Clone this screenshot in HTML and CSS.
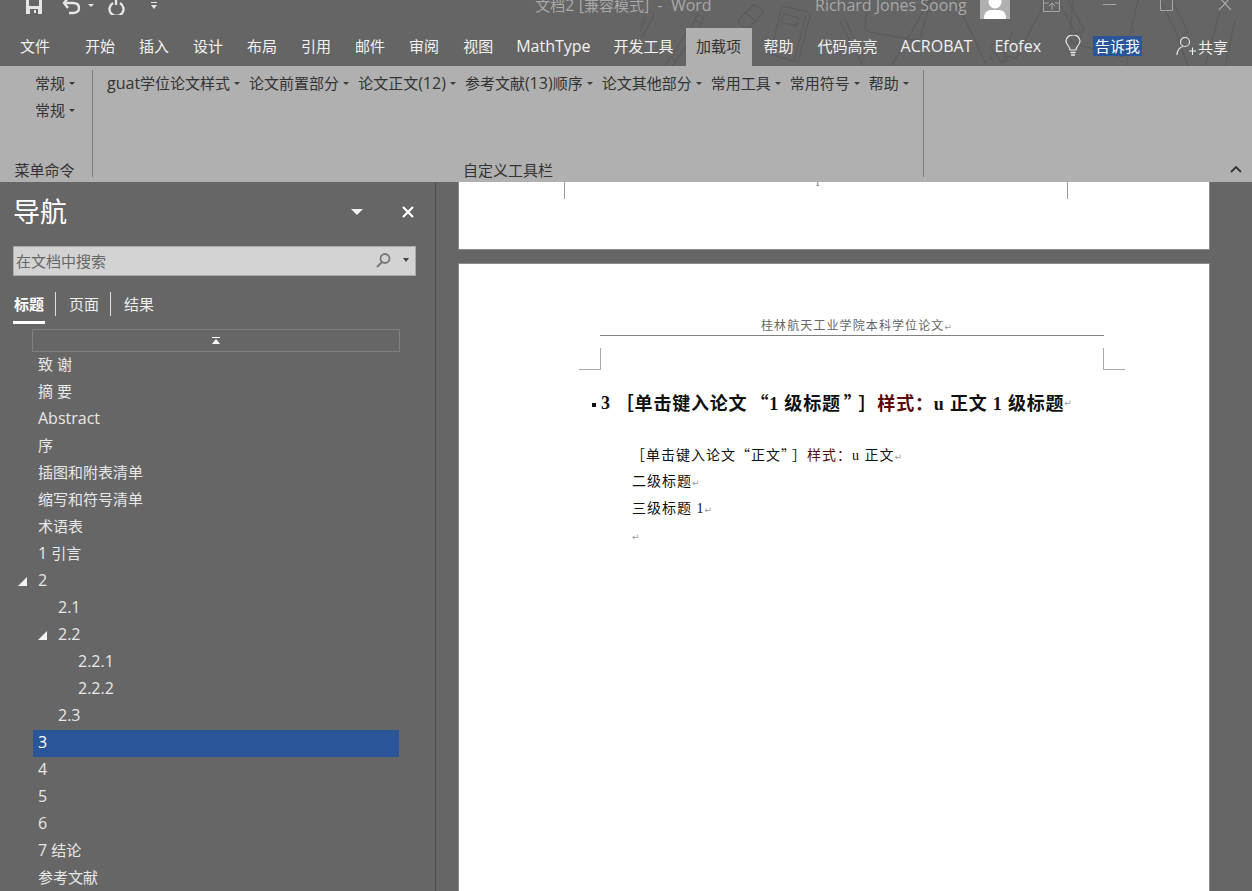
FILE: index.html
```html
<!DOCTYPE html>
<html lang="zh-CN">
<head>
<meta charset="utf-8">
<title>文档2 [兼容模式] - Word</title>
<link rel="stylesheet" href="styles.css">
</head>
<body>
<header class="chrome">
  <svg class="doodles" width="612" height="66" viewBox="640 0 612 66" fill="none" stroke="#5b5b5b" stroke-width="1.1">
    <path d="M636 34l10-20c3-5 9-2 7 3l-9 17c-2 4-6 2-5-1l7-14"/>
    <path d="M665 66l30-46 7 4-30 42M671 58l7 5M695 20l3-6 5 3-1 7"/>
    <path d="M740 18l14-14 10 8-14 15c-3 2-5 2-7 0l-4-4c-1-2-1-3 1-5zM746 13l11 9"/>
    <path d="M782 6l26 6c2 0 3 2 2 4l-12 46-28-8zM784 14l15 4-3 8-15-4zM806 16l-12 45"/>
    <path d="M840 22l19 36 4 7M845 20l19 37M860 65l5-6"/>
    <path d="M868 0l-3 26c0 3 1 5 4 6l46 8c3 0 5-1 6-4l10-36M930 0l-28 48-10 17"/>
    <path d="M992 60c-4-5 0-9 3-6l6 7c4 4 8-1 5-5l-10-11c-3-3-7 0-5 3l9 11"/>
    <path d="M1012 32l-10 31 6-7 8 2 30-58M955 0l20 40 10 23"/>
    <path d="M1058 0l18 34 8-4-16-30M1074 34l4 12 4-14"/>
    <path d="M1073 0l-3 36c0 4 2 7 6 8l42 12c4 1 7 0 8-4l12-52M1134 30l-8 36"/>
    <path d="M1160 0l16 32 12 34M1172 0l16 32-6 3"/>
    <path d="M1205 66l18-66M1235 20l-10 46"/>
  </svg>
  <div class="titlebar">
    <div class="qat">
      <svg class="qat-save" width="16" height="14" viewBox="0 0 16 14"><path d="M0-4h16v18H0z" fill="#e6e6e6"/><path d="M3-4h10v10H3z" fill="#666"/><path d="M4 9h8v5H4z" fill="#666"/><path d="M8 10h2v3H8z" fill="#e6e6e6"/></svg>
      <svg class="qat-undo" width="19" height="15" viewBox="0 0 19 15" fill="none" stroke="#e6e6e6" stroke-width="2.4"><path d="M2 3h9c4 0 6 2 6 5s-2 5-6 5H7"/><path d="M6-2L2 3l4 5"/></svg>
      <span class="caret caret-light qat-caret"></span>
      <svg class="qat-redo" width="17" height="15" viewBox="0 0 17 15" fill="none" stroke="#e6e6e6" stroke-width="2.4"><path d="M5 3a7 7 0 1 0 7 0"/><path d="M8-2v7"/></svg>
      <svg class="qat-more" width="6" height="8" viewBox="0 0 6 8" fill="#e6e6e6"><path d="M0 0h6v1H0zM0 3h6L3 7z"/></svg>
    </div>
    <div class="doc-title">文档<span class="lat">2 [</span>兼容模式<span class="lat">]&nbsp; -&nbsp; Word</span></div>
    <div class="account">
      <span class="user lat">Richard Jones Soong</span>
      <span class="avatar"><svg width="30" height="19" viewBox="0 0 30 19" fill="#fff"><circle cx="15" cy="2" r="6.5"/><path d="M4 19c0-7 3-9 8-9h6c5 0 8 2 8 9z"/></svg></span>
      <svg class="win win-restore" width="18" height="12" viewBox="0 0 18 12" fill="none" stroke="#a6a6a6"><path d="M.5 0v11.5h16V0M9 10V3M6 6l3-3 3 3M.5 3h5M12 3h4.500"/></svg>
      <svg class="win win-min" width="14" height="12" viewBox="0 0 14 12" stroke="#a6a6a6"><path d="M0 4.500h13"/></svg>
      <svg class="win win-max" width="14" height="12" viewBox="0 0 14 12" fill="none" stroke="#a6a6a6"><path d="M.5-2v12.500h12V-2"/></svg>
      <svg class="win win-close" width="14" height="12" viewBox="0 0 14 12" stroke="#a6a6a6" stroke-width="1.200"><path d="M1-3l12 13M13-3L1 10"/></svg>
    </div>
  </div>
  <nav class="tabs">
    <span class="tab tab-file">文件</span>
    <span class="tab">开始</span>
    <span class="tab">插入</span>
    <span class="tab">设计</span>
    <span class="tab">布局</span>
    <span class="tab">引用</span>
    <span class="tab">邮件</span>
    <span class="tab">审阅</span>
    <span class="tab">视图</span>
    <span class="tab tab-lat">MathType</span>
    <span class="tab">开发工具</span>
    <span class="tab tab-active">加载项</span>
    <span class="tab">帮助</span>
    <span class="tab">代码高亮</span>
    <span class="tab tab-lat">ACROBAT</span>
    <span class="tab tab-lat">Efofex</span>
    <svg class="bulb" width="16" height="21" viewBox="0 0 16 21" fill="none" stroke="#ececec" stroke-width="1.200"><path d="M5 15c0-4-4-5-4-9a7 6 0 0 1 14 0c0 4-4 5-4 9z"/><path d="M5.500 17.500h5M6 20h4" stroke-width="1.600"/></svg>
    <span class="tell">告诉我</span>
    <span class="share"><svg width="20" height="20" viewBox="0 0 20 20" fill="none" stroke="#ececec" stroke-width="1.100"><circle cx="9" cy="6" r="4.500"/><path d="M1 19c0-5 3-8 6-8.500M13 15h7M16.500 11.500v7.500"/></svg>共享</span>
  </nav>
</header>

<section class="ribbon">
  <div class="group group-menu">
    <div class="group-stack">
      <span class="cmd">常规<i class="caret"></i></span>
      <span class="cmd">常规<i class="caret"></i></span>
    </div>
    <div class="group-label">菜单命令</div>
  </div>
  <div class="group group-tools">
    <div class="group-row">
      <span class="cmd"><span><span class="lat">guat</span>学位论文样式</span><i class="caret"></i></span>
      <span class="cmd">论文前置部分<i class="caret"></i></span>
      <span class="cmd"><span>论文正文<span class="lat">(12)</span></span><i class="caret"></i></span>
      <span class="cmd"><span>参考文献<span class="lat">(13)</span>顺序</span><i class="caret"></i></span>
      <span class="cmd">论文其他部分<i class="caret"></i></span>
      <span class="cmd">常用工具<i class="caret"></i></span>
      <span class="cmd">常用符号<i class="caret"></i></span>
      <span class="cmd">帮助<i class="caret"></i></span>
    </div>
    <div class="group-label">自定义工具栏</div>
  </div>
  <div class="ribbon-end">
    <svg width="12" height="8" viewBox="0 0 12 8" fill="none" stroke="#333" stroke-width="1.800"><path d="M1 7l5-5 5 5"/></svg>
  </div>
</section>

<main class="workspace">
  <aside class="navpane">
    <div class="nav-head">
      <h1 class="nav-title">导航</h1>
      <span class="nav-menu"></span>
      <svg class="nav-close" width="12" height="12" viewBox="0 0 12 12" stroke="#fff" stroke-width="2.200"><path d="M1 1l10 10M11 1L1 11"/></svg>
    </div>
    <div class="search">
      <span class="search-text">在文档中搜索</span>
      <svg class="search-icon" width="15" height="15" viewBox="0 0 15 15" fill="none" stroke="#777" stroke-width="1.800"><circle cx="9" cy="5.500" r="4.500"/><path d="M6 9l-5 5"/></svg>
      <i class="caret caret-search"></i>
    </div>
    <div class="nav-tabs">
      <span class="nav-tab nav-tab-on">标题</span>
      <span class="nav-tab nav-tab-sep">页面</span>
      <span class="nav-tab nav-tab-sep">结果</span>
    </div>
    <div class="scroll-up"><svg width="8" height="7" viewBox="0 0 8 7" fill="#fff"><path d="M0 0h8v1H0zM4 2l4 5H0z"/></svg></div>
    <ul class="tree">
      <li class="node">致 谢</li>
      <li class="node">摘 要</li>
      <li class="node node-lat">Abstract</li>
      <li class="node">序</li>
      <li class="node">插图和附表清单</li>
      <li class="node">缩写和符号清单</li>
      <li class="node">术语表</li>
      <li class="node"><span class="lat">1 </span>引言</li>
      <li class="node node-lat"><i class="twisty"></i>2</li>
      <li class="node node-lat level2">2.1</li>
      <li class="node node-lat level2"><i class="twisty"></i>2.2</li>
      <li class="node node-lat level3">2.2.1</li>
      <li class="node node-lat level3">2.2.2</li>
      <li class="node node-lat level2">2.3</li>
      <li class="node node-lat node-on">3</li>
      <li class="node node-lat">4</li>
      <li class="node node-lat">5</li>
      <li class="node node-lat">6</li>
      <li class="node"><span class="lat">7 </span>结论</li>
      <li class="node">参考文献</li>
    </ul>
  </aside>

  <div class="docarea">
    <div class="page page-prev">
      <div class="prev-marks"><span class="prev-mark"></span><span class="prev-num">1</span><span class="prev-mark"></span></div>
    </div>
    <article class="page page-cur">
      <div class="running-head">桂林航天工业学院本科学位论文<span class="pil">↵</span></div>
      <div class="head-rule"></div>
      <div class="crops"><span class="crop crop-l"></span><span class="crop crop-r"></span></div>
      <h2 class="h1"><span class="bullet"></span><span class="h1-num">3</span><span class="h1-text">［单击键入论文<span class="q">“</span>1 级标题<span class="q">”</span><span class="close">］</span><span class="red">样式：</span>u 正文 1 级标题</span><span class="pil">↵</span></h2>
      <p class="para para-first">［单击键入论文<span class="q">“</span>正文<span class="q">”</span><span class="close">］</span><span class="red">样式：</span>u 正文<span class="pil">↵</span></p>
      <p class="para">二级标题<span class="pil">↵</span></p>
      <p class="para">三级标题 1<span class="pil">↵</span></p>
      <p class="para"><span class="pil">↵</span></p>
    </article>
  </div>
</main>
</body>
</html>
```
FILE: styles.css
```css
* { box-sizing: border-box; }
html, body { margin: 0; padding: 0; height: 891px; overflow: hidden; }
body {
  width: 1252px;
  background: #666;
  font-family: "Open Sans", "Noto Sans CJK SC", sans-serif;
  font-size: 15px;
  color: #eee;
}
i { font-style: normal; }
.lat { font-size: 16px; }
.caret {
  display: inline-block;
  flex: none;
  width: 0; height: 0;
  border-left: 3px solid transparent;
  border-right: 3px solid transparent;
  border-top: 3px solid #3a3a3a;
}
.caret-light { border-top-color: #e6e6e6; }

/* window chrome */
.chrome { position: relative; height: 66px; background: #656565; overflow: hidden; }
.doodles { position: absolute; left: 640px; top: 0; }
.titlebar { position: relative; height: 28px; display: flex; align-items: flex-start; }
.qat { width: 432px; display: flex; align-items: flex-start; padding-left: 26px; }
.qat-undo { margin-left: 20px; }
.qat-caret { margin: 4px 0 0 7px; }
.qat-redo { margin-left: 14px; }
.qat-more { margin: 2px 0 0 26px; }
.doc-title { width: 383px; text-align: center; line-height: 10px; color: #a8a8a8; white-space: nowrap; }
.account { display: flex; align-items: flex-start; }
.user { line-height: 10px; color: #a8a8a8; white-space: nowrap; width: 165px; }
.avatar { width: 30px; height: 19px; background: #b0b0b0; display: block; }
.avatar svg { display: block; }
.win-restore { margin-left: 33px; }
.win-min { margin-left: 42px; }
.win-max { margin-left: 43px; }
.win-close { margin-left: 44px; }

.tabs { position: relative; height: 38px; display: flex; align-items: stretch; padding-left: 8px; white-space: nowrap; color: #f2f2f2; }
.tab { padding: 0 12px; line-height: 36px; }
.tab-lat { font-size: 16px; padding: 0 11px; }
.tab-file { margin-right: 11px; }
.tab-active { background: #b0b0b0; color: #333; padding: 0 10.5px; }
.bulb { margin: 7px 0 0 13px; }
.tell { align-self: flex-start; margin: 8px 0 0 12px; padding: 0 2px; height: 20px; line-height: 20px; background: #2a5699; color: #fff; }
.share { display: flex; align-items: center; margin-left: 34px; height: 36px; gap: 2px; }

/* ribbon */
.ribbon { height: 116px; background: #b0b0b0; color: #333; display: flex; padding-top: 4px; }
.group { position: relative; height: 107px; border-right: 1px solid #7d7d7d; display: flex; flex-direction: column; white-space: nowrap; }
.group-menu { width: 93px; }
.group-tools { width: 831px; }
.group-stack { display: flex; flex-direction: column; align-items: flex-start; padding-left: 35px; gap: 7px; height: 90px; }
.group-row { display: flex; gap: 9px; height: 90px; padding-left: 14px; }
.cmd { height: 20px; line-height: 20px; margin-top: 3px; display: inline-flex; align-items: center; gap: 4px; }
.group-stack .cmd { margin-top: 0; }
.group-stack .cmd:first-child { margin-top: 3px; }
.cmd .caret { margin-top: 1px; }
.group-label { text-align: center; line-height: 20px; height: 15px; }
.group-menu .group-label { padding-right: 3px; }
.ribbon-end { flex: 1; display: flex; justify-content: flex-end; align-items: flex-end; padding: 0 10px 4px 0; height: 107px; }

/* workspace */
.workspace { display: flex; height: 709px; overflow: hidden; }
.navpane { width: 436px; flex: none; border-right: 1px solid #4e4e4e; padding-left: 13px; position: relative; }
.nav-head { height: 64px; display: flex; align-items: center; padding-bottom: 4px; }
.nav-title { margin: 0; font-size: 27px; font-weight: 400; color: #fff; width: 338px; line-height: 60px; }
.nav-menu { width: 0; height: 0; border-left: 6px solid transparent; border-right: 6px solid transparent; border-top: 6px solid #f2f2f2; }
.nav-close { margin-left: 39px; }
.search { width: 403px; height: 30px; background: #d3d3d3; border: 1px solid #aaa; display: flex; align-items: center; padding: 0 6px 2px 2px; color: #666; }
.search-text { flex: 1; }
.search-icon { margin-right: 12px; }
.caret-search { border-top-color: #444; border-left-width: 3.5px; border-right-width: 3.5px; border-top-width: 4px; }
.nav-tabs { display: flex; height: 39px; margin-top: 16px; color: #eee; align-items: flex-start; }
.nav-tab { line-height: 24px; height: 24px; padding: 0 11px 0 13px; }
.nav-tab:first-child { padding: 0 11px 0 1px; }
.nav-tab-sep { border-left: 1px solid #e0e0e0; }
.nav-tab-on { color: #fff; font-weight: 700; position: relative; }
.nav-tab-on::after { content: ""; position: absolute; left: 0; bottom: -8px; width: 32px; height: 3px; background: #fff; }
.scroll-up { margin: -2px 0 0 19px; width: 368px; height: 23px; border: 1px solid #7f7f7f; display: flex; align-items: center; justify-content: center; }
.tree { list-style: none; margin: 0 0 0 20px; padding: 0; width: 366px; }
.node { position: relative; height: 27px; line-height: 24px; padding-left: 5px; color: #e8e8e8; white-space: nowrap; }
.node-lat { font-size: 16px; }
.node.level2 { padding-left: 25px; }
.node.level3 { padding-left: 45px; }
.node-on { background: #2a5699; color: #fff; }
.twisty { position: absolute; left: -15px; top: 9px; width: 9px; height: 9px; background: #f2f2f2; clip-path: polygon(100% 0, 100% 100%, 0 100%); }
.level2 .twisty { left: 5px; }

/* document */
.docarea { flex: 1; padding-left: 22px; }
.page { width: 752px; background: #fff; border: 1px solid #8c8c8c; color: #111; font-family: "Liberation Serif", "Noto Sans CJK SC", serif; }
.page-prev { height: 68px; border-top: 0; margin-bottom: 13px; }
.prev-marks { display: flex; justify-content: space-between; padding: 0 141px 0 105px; height: 17px; }
.prev-mark { width: 1px; height: 17px; background: #999; }
.prev-num { font-size: 11px; color: #777; line-height: 0; margin-left: 3px; }
.page-cur { height: 640px; padding-top: 53px; }
.running-head { text-align: center; font-family: "Noto Sans CJK SC", sans-serif; font-size: 12px; letter-spacing: 1.1px; line-height: 16px; color: #666; padding-left: 45px; }
.head-rule { margin: 0 105px 0 141px; height: 1px; background: #808080; }
.crops { display: flex; justify-content: space-between; padding: 0 84px 0 120px; margin-top: 12px; }
.crop { width: 22px; height: 22px; border-bottom: 1px solid #aaa; }
.crop-l { border-right: 1px solid #aaa; }
.crop-r { border-left: 1px solid #aaa; }
.h1 { margin: 20px 0 0 133px; height: 26px; line-height: 26px; font-size: 18px; font-weight: 700; display: flex; align-items: center; white-space: nowrap; letter-spacing: .8px; }
.bullet { width: 4px; height: 4px; background: #111; margin: 4px 5px 0 0; }
.h1-num { margin-right: 5px; }
.q { font-family: "Noto Sans CJK SC", sans-serif; }
.h1 .q { margin-left: 3px; }
.h1 .close { margin-left: 5px; }
.para .close { margin-left: 3px; }
.pil { font-family: "DejaVu Sans", sans-serif; font-size: 9px; color: #999; font-weight: 400; letter-spacing: 0; }
.red { color: #5a0a0a; }
.para { margin: 0 0 0 173px; height: 27px; line-height: 27px; font-size: 14px; letter-spacing: 1px; white-space: nowrap; }
.para-first { margin-top: 25px; margin-left: 172px; }
```
